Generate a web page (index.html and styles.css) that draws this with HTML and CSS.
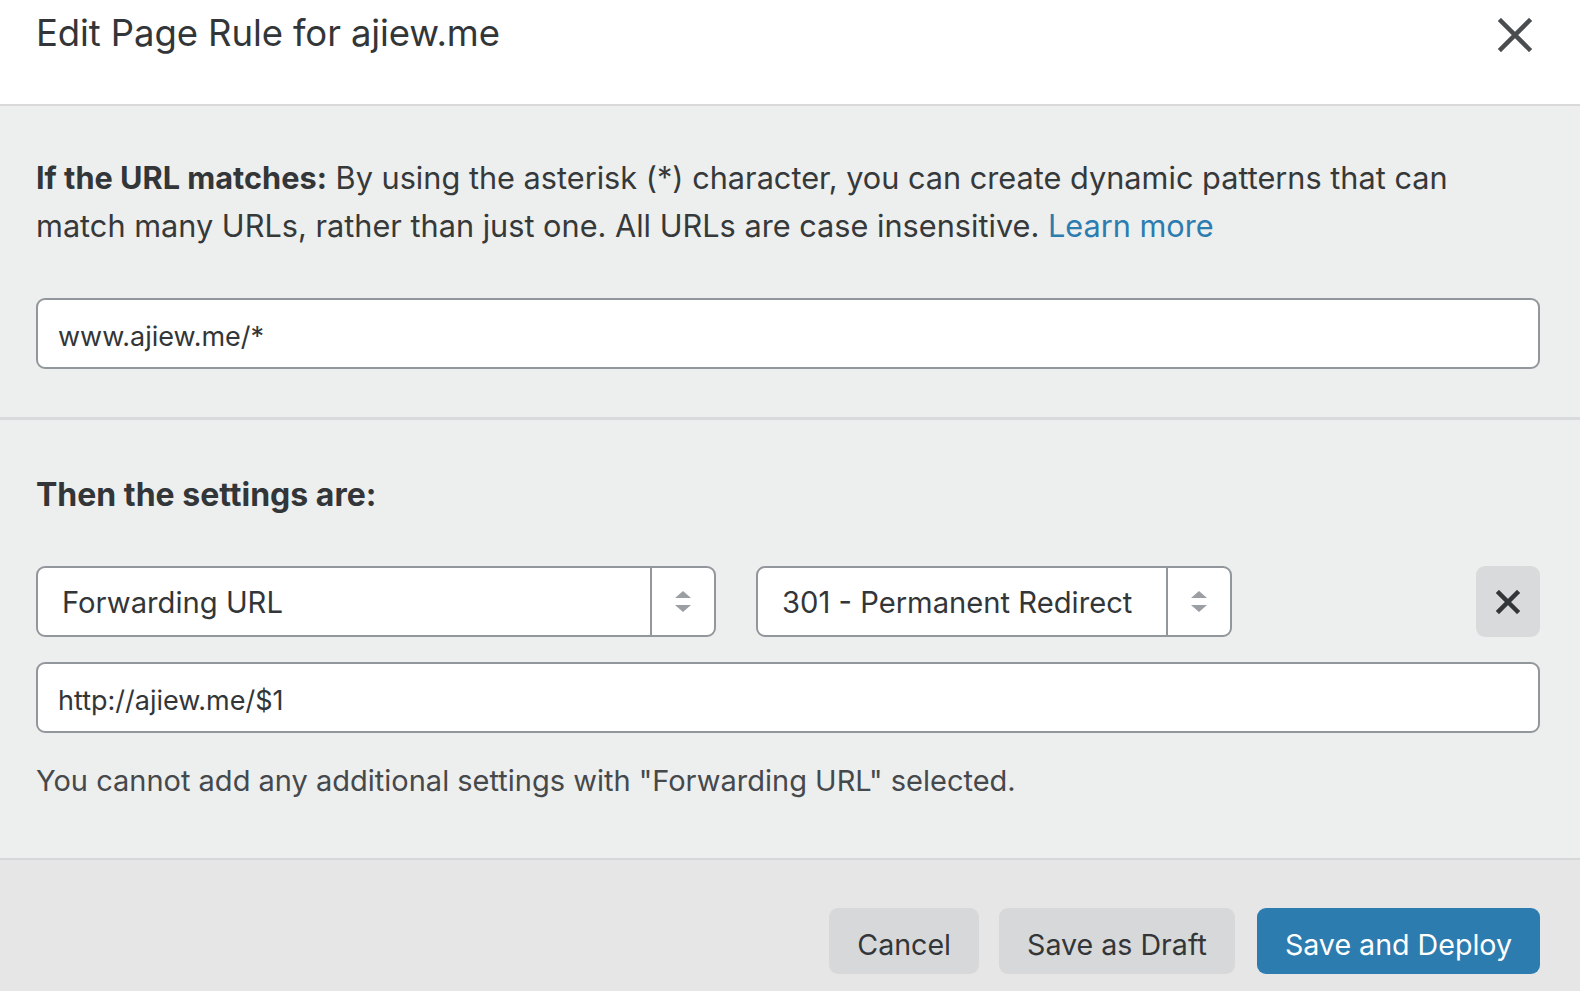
FILE: index.html
```html
<!DOCTYPE html>
<html lang="en">
<head>
<meta charset="utf-8">
<title>Edit Page Rule</title>
<link rel="stylesheet" href="styles.css">
</head>
<body>
<div class="modal">
  <header class="modal-header">
    <h1 class="modal-title">Edit Page Rule for ajiew.me</h1>
    <button class="close-btn" aria-label="Close">
      <svg width="34" height="34" viewBox="0 0 34 34"><path d="M3 3 L31 31 M31 3 L3 31" stroke="#4a4d50" stroke-width="4.5" stroke-linecap="square" fill="none"/></svg>
    </button>
  </header>

  <section class="section section-match">
    <p class="desc"><strong>If the URL matches:</strong> By using the asterisk (*) character, you can create dynamic patterns that can match many URLs, rather than just one. All URLs are case insensitive. <a href="#" class="link">Learn more</a></p>
    <div class="input">www.ajiew.me/*</div>
  </section>

  <section class="section section-settings">
    <h2 class="settings-title">Then the settings are:</h2>
    <div class="setting-row">
      <div class="select select-setting">
        <span class="select-value">Forwarding URL</span>
        <span class="select-arrows">
          <svg width="18" height="24" viewBox="0 0 18 24"><path d="M9 1 L17 8 L1 8 Z M1 15 L17 15 L9 22 Z" fill="#9b9fa3"/></svg>
        </span>
      </div>
      <div class="select select-status">
        <span class="select-value">301 - Permanent Redirect</span>
        <span class="select-arrows">
          <svg width="18" height="24" viewBox="0 0 18 24"><path d="M9 1 L17 8 L1 8 Z M1 15 L17 15 L9 22 Z" fill="#9b9fa3"/></svg>
        </span>
      </div>
      <button class="remove-btn" aria-label="Remove">
        <svg width="24" height="24" viewBox="0 0 24 24"><path d="M3 3 L21 21 M21 3 L3 21" stroke="#333638" stroke-width="4.5" stroke-linecap="square" fill="none"/></svg>
      </button>
    </div>
    <div class="input input-url">http://ajiew.me/$1</div>
    <p class="note">You cannot add any additional settings with "Forwarding URL" selected.</p>
  </section>

  <footer class="modal-footer">
    <button class="btn btn-default">Cancel</button>
    <button class="btn btn-default">Save as Draft</button>
    <button class="btn btn-primary">Save and Deploy</button>
  </footer>
</div>
</body>
</html>
```

FILE: styles.css
```css
* { box-sizing: border-box; }
html, body {
  margin: 0;
  padding: 0;
  background: #e6e6e6;
  font-family: Inter, "Noto Sans", sans-serif;
  color: #36393a;
}
.modal {
  width: 1580px;
  min-height: 991px;
  display: flex;
  flex-direction: column;
}
.modal-header {
  height: 106px;
  background: #ffffff;
  border-bottom: 2px solid #d9d9d9;
  display: flex;
  align-items: flex-start;
  justify-content: space-between;
  padding: 11px 48px 0 36px;
}
.modal-title {
  margin: 0;
  font-size: 36.5px;
  font-weight: 400;
  line-height: 44px;
  color: #333638;
  letter-spacing: -0.1px;
}
.close-btn {
  border: 0;
  background: none;
  padding: 0;
  margin-top: 7px;
  width: 34px;
  height: 34px;
  cursor: pointer;
}
.section {
  background: #edeeee;
  padding-left: 36px;
  padding-right: 40px;
}
.section-match {
  padding-top: 48px;
  padding-bottom: 48px;
  border-bottom: 3px solid #d9dadb;
}
.desc {
  margin: 0 0 48px;
  padding-right: 60px;
  font-size: 30.7px;
  line-height: 48px;
  color: #36393a;
}
.desc strong { font-weight: 700; color: #333638; }
.link { color: #2c7cb0; text-decoration: none; }
.input {
  height: 71px;
  background: #ffffff;
  border: 2px solid #92979b;
  border-radius: 9px;
  padding: 5px 0 0 20px;
  display: flex;
  align-items: center;
  font-size: 27px;
  color: #333638;
}
.section-settings {
  padding-top: 51px;
  padding-bottom: 53px;
}
.settings-title {
  margin: 0 0 47px;
  font-size: 32px;
  line-height: 48px;
  font-weight: 700;
  color: #333638;
}
.setting-row {
  display: flex;
  align-items: stretch;
  height: 71px;
  margin-bottom: 25px;
}
.select {
  background: #ffffff;
  border: 2px solid #92979b;
  border-radius: 9px;
  display: flex;
  align-items: stretch;
}
.select-setting { width: 680px; }
.select-status { width: 476px; margin-left: 40px; }
.select-value {
  flex: 1;
  display: flex;
  align-items: center;
  padding: 2px 0 0 24px;
  font-size: 29.2px;
  color: #333638;
}
.select-arrows {
  width: 64px;
  border-left: 2px solid #92979b;
  display: flex;
  align-items: center;
  justify-content: center;
}
.remove-btn {
  margin-left: auto;
  width: 64px;
  border: 0;
  border-radius: 9px;
  background: #d9dadb;
  display: flex;
  align-items: center;
  justify-content: center;
  padding: 0;
  cursor: pointer;
}
.note {
  margin: 24px 0 0;
  font-size: 29px;
  line-height: 48px;
  color: #45494c;
}
.modal-footer {
  flex: 1;
  background: #e6e6e6;
  border-top: 2px solid #d6d7d8;
  display: flex;
  justify-content: flex-end;
  align-items: flex-start;
  gap: 20px;
  padding: 48px 40px 0 0;
}
.btn {
  height: 66px;
  border: 0;
  border-radius: 9px;
  font-family: Inter, "Noto Sans", sans-serif;
  font-size: 28.6px;
  padding: 6px 28px 0;
  cursor: pointer;
}
.btn-default { background: #d7d8d9; color: #333638; }
.btn-primary { background: #2c7cb0; color: #ffffff; margin-left: 2px; }
```
